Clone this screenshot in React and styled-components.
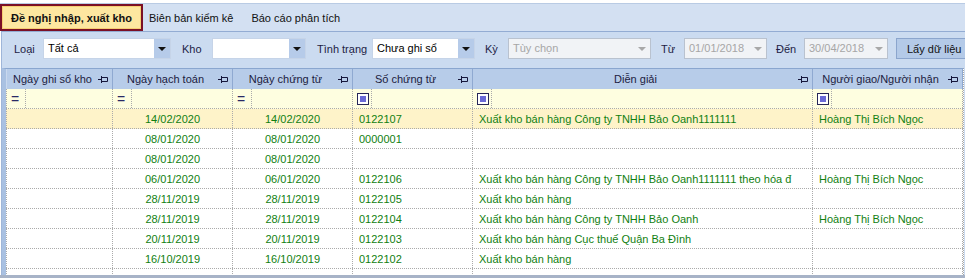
import React from "react"
import styled, { createGlobalStyle } from "styled-components"

const Global = createGlobalStyle`
  html, body {
    margin: 0;
    padding: 0;
    background: #ffffff;
  }
  body {
    font-family: "Liberation Sans", Arial, sans-serif;
    font-size: 11px;
  }
`

const COLS = [107, 120, 120, 120, 340, 150]

const Window = styled.div`
  width: 965px;
  height: 278px;
  overflow: hidden;
  display: flex;
  flex-direction: column;
  background: #ffffff;
  padding-top: 3px;
  box-sizing: border-box;
`

const TabBar = styled.div`
  display: flex;
  align-items: stretch;
  height: 27px;
  background: #d3e0f2;
  border-top: 1px solid #b9cbe4;
`

const Tab = styled.div`
  display: flex;
  align-items: center;
  padding: 0 12px 0 6px;
  color: #111;
  white-space: nowrap;
  ${p =>
    p.$active &&
    `
    width: 143px;
    box-sizing: border-box;
    justify-content: center;
    padding: 0;
    font-weight: bold;
    background: #fde7a0;
    border: 2px solid #7b1026;
    box-shadow: inset 0 0 0 1px #f6cf73;
  `}
`

const Panel = styled.div`
  flex: 1;
  display: flex;
  flex-direction: column;
  background: #cbdbf0;
  border-top: 1px solid #93acd3;
  border-left: 1px solid #9fb6d9;
  margin-left: 1px;
  min-height: 0;
`

const FilterBar = styled.div`
  display: flex;
  align-items: center;
  height: 21px;
  padding: 6px 0 9px 12px;
`

const Label = styled.span`
  flex: none;
  width: ${p => p.$w}px;
  margin-left: ${p => p.$ml || 0}px;
  color: #1d1d45;
  white-space: nowrap;
`

const Combo = styled.div`
  flex: none;
  display: flex;
  width: ${p => p.$w}px;
  height: 21px;
  box-sizing: border-box;
  background: ${p => (p.$disabled ? "#f1f3f6" : "#ffffff")};
  border: 1px solid ${p => (p.$disabled ? "#b9c2cf" : "#c6d4e8")};
`

const ComboValue = styled.span`
  flex: 1;
  padding: 3px 0 0 4px;
  color: ${p => (p.$disabled ? "#a6a6a6" : "#000")};
  white-space: nowrap;
  overflow: hidden;
`

const ComboArrow = styled.span`
  flex: none;
  width: 16px;
  display: flex;
  align-items: center;
  justify-content: center;
  background: ${p => (p.$disabled ? "#f1f3f6" : "#b6cbe9")};
  &::after {
    content: "";
    border-left: 4px solid transparent;
    border-right: 4px solid transparent;
    border-top: 4px solid ${p => (p.$disabled ? "#a8a8a8" : "#111")};
  }
`

const Button = styled.div`
  flex: none;
  margin-left: 8px;
  width: 75px;
  height: 21px;
  box-sizing: border-box;
  display: flex;
  align-items: center;
  padding-left: 10px;
  background: #b4cae8;
  border: 1px solid #8ba5cd;
  color: #111;
  white-space: nowrap;
`

const Grid = styled.div`
  flex: 1;
  min-height: 0;
  display: flex;
  flex-direction: column;
  width: 957px;
  background: #ffffff;
  border-top: 1px solid #8aa6cf;
  border-left: 4px solid #a9c1e2;
  border-right: 1px dotted #a8a8a8;
  overflow: hidden;
`

const Row = styled.div`
  display: flex;
  flex: none;
  height: 20px;
  background: ${p => p.$bg || "#ffffff"};
  box-sizing: border-box;
  border-bottom: ${p => (p.$head ? "none" : "1px dotted #ababab")};
`

const HeadCell = styled.div`
  flex: none;
  display: flex;
  align-items: center;
  box-sizing: border-box;
  width: ${p => p.$w}px;
  background: #b7cce9;
  border-right: 1px solid #8fa9d1;
  border-left: ${p => (p.$first ? "1px solid #c9d8ee" : "none")};
  color: #1b1b40;
`

const HeadTitle = styled.span`
  flex: 1;
  text-align: center;
  white-space: nowrap;
`

const Pin = styled.svg`
  flex: none;
  margin-right: 4px;
`

const FilterCell = styled.div`
  flex: none;
  display: flex;
  box-sizing: border-box;
  width: ${p => p.$w}px;
  border-right: 1px dotted #ababab;
  border-left: ${p => (p.$first ? "1px dotted #ababab" : "none")};
`

const Op = styled.div`
  flex: none;
  width: 19px;
  display: flex;
  align-items: center;
  padding-left: 4px;
  box-sizing: border-box;
  border-right: 1px dotted #ababab;
  color: #2a2a66;
  font-size: 14px;
`

const CheckIcon = styled.span`
  width: 12px;
  height: 12px;
  box-sizing: border-box;
  border: 1px solid #262658;
  background: #ffffff;
  display: flex;
  align-items: center;
  justify-content: center;
  &::after {
    content: "";
    width: 6px;
    height: 6px;
    background: #6a6ad6;
  }
`

const Cell = styled.div`
  flex: none;
  box-sizing: border-box;
  width: ${p => p.$w}px;
  display: flex;
  align-items: center;
  justify-content: ${p => (p.$center ? "center" : "flex-start")};
  padding-left: ${p => (p.$center ? 0 : 6)}px;
  border-right: 1px dotted #ababab;
  border-left: ${p => (p.$first ? "1px dotted #ababab" : "none")};
  color: #118011;
  white-space: nowrap;
  overflow: hidden;
`

const BottomBar = styled.div`
  flex: none;
  height: 3px;
  background: #a7b3c7;
  margin-left: -2px;
`

const headers = [
  "Ngày ghi sổ kho",
  "Ngày hạch toán",
  "Ngày chứng từ",
  "Số chứng từ",
  "Diễn giải",
  "Người giao/Người nhận"
]

const rows = [
  ["", "14/02/2020", "14/02/2020", "0122107", "Xuất kho bán hàng Công ty TNHH Bảo Oanh1111111", "Hoàng Thị Bích Ngọc"],
  ["", "08/01/2020", "08/01/2020", "0000001", "", ""],
  ["", "08/01/2020", "08/01/2020", "", "", ""],
  ["", "06/01/2020", "06/01/2020", "0122106", "Xuất kho bán hàng Công ty TNHH Bảo Oanh1111111 theo hóa đ", "Hoàng Thị Bích Ngọc"],
  ["", "28/11/2019", "28/11/2019", "0122105", "Xuất kho bán hàng", ""],
  ["", "28/11/2019", "28/11/2019", "0122104", "Xuất kho bán hàng Công ty TNHH Bảo Oanh", "Hoàng Thị Bích Ngọc"],
  ["", "20/11/2019", "20/11/2019", "0122103", "Xuất kho bán hàng Cục thuế Quận Ba Đình", ""],
  ["", "16/10/2019", "16/10/2019", "0122102", "Xuất kho bán hàng", ""],
  ["", "", "", "", "", ""]
]

const PinIcon = () => (
  <Pin width="10" height="7" viewBox="0 0 10 7">
    <path d="M0 3.5H3M3.5 0V7M3.5 1.5H9.5V5.5H3.5" stroke="#16163a" fill="none" />
  </Pin>
)

const Select = ({ w, value, disabled }) => (
  <Combo $w={w} $disabled={disabled}>
    <ComboValue $disabled={disabled}>{value}</ComboValue>
    <ComboArrow $disabled={disabled} />
  </Combo>
)

export default function App() {
  return (
    <Window>
      <Global />
      <TabBar>
        <Tab $active>Đề nghị nhập, xuất kho</Tab>
        <Tab>Biên bản kiểm kê</Tab>
        <Tab>Báo cáo phân tích</Tab>
      </TabBar>
      <Panel>
        <FilterBar>
          <Label $w={29}>Loại</Label>
          <Select w={128} value="Tất cả" />
          <Label $ml={11} $w={30}>Kho</Label>
          <Select w={94} value="" />
          <Label $ml={11} $w={55}>Tình trạng</Label>
          <Select w={103} value="Chưa ghi sổ" />
          <Label $ml={10} $w={23}>Kỳ</Label>
          <Select w={143} value="Tùy chọn" disabled />
          <Label $ml={10} $w={23}>Từ</Label>
          <Select w={83} value="01/01/2018" disabled />
          <Label $ml={9} $w={28}>Đến</Label>
          <Select w={84} value="30/04/2018" disabled />
          <Button>Lấy dữ liệu</Button>
        </FilterBar>
        <Grid>
          <Row $head>
            {headers.map((h, i) => (
              <HeadCell key={h} $w={COLS[i]} $first={i === 0}>
                <HeadTitle>{h}</HeadTitle>
                <PinIcon />
              </HeadCell>
            ))}
          </Row>
          <Row $bg="#fefee0">
            {COLS.map((w, i) => (
              <FilterCell key={i} $w={w} $first={i === 0}>
                <Op>{i < 3 ? "=" : <CheckIcon />}</Op>
              </FilterCell>
            ))}
          </Row>
          {rows.map((r, ri) => (
            <Row key={ri} $bg={ri === 0 ? "#fef3c9" : "#ffffff"}>
              {r.map((v, i) => (
                <Cell key={i} $w={COLS[i]} $first={i === 0} $center={i < 3}>
                  {v}
                </Cell>
              ))}
            </Row>
          ))}
        </Grid>
        <BottomBar />
      </Panel>
    </Window>
  )
}
